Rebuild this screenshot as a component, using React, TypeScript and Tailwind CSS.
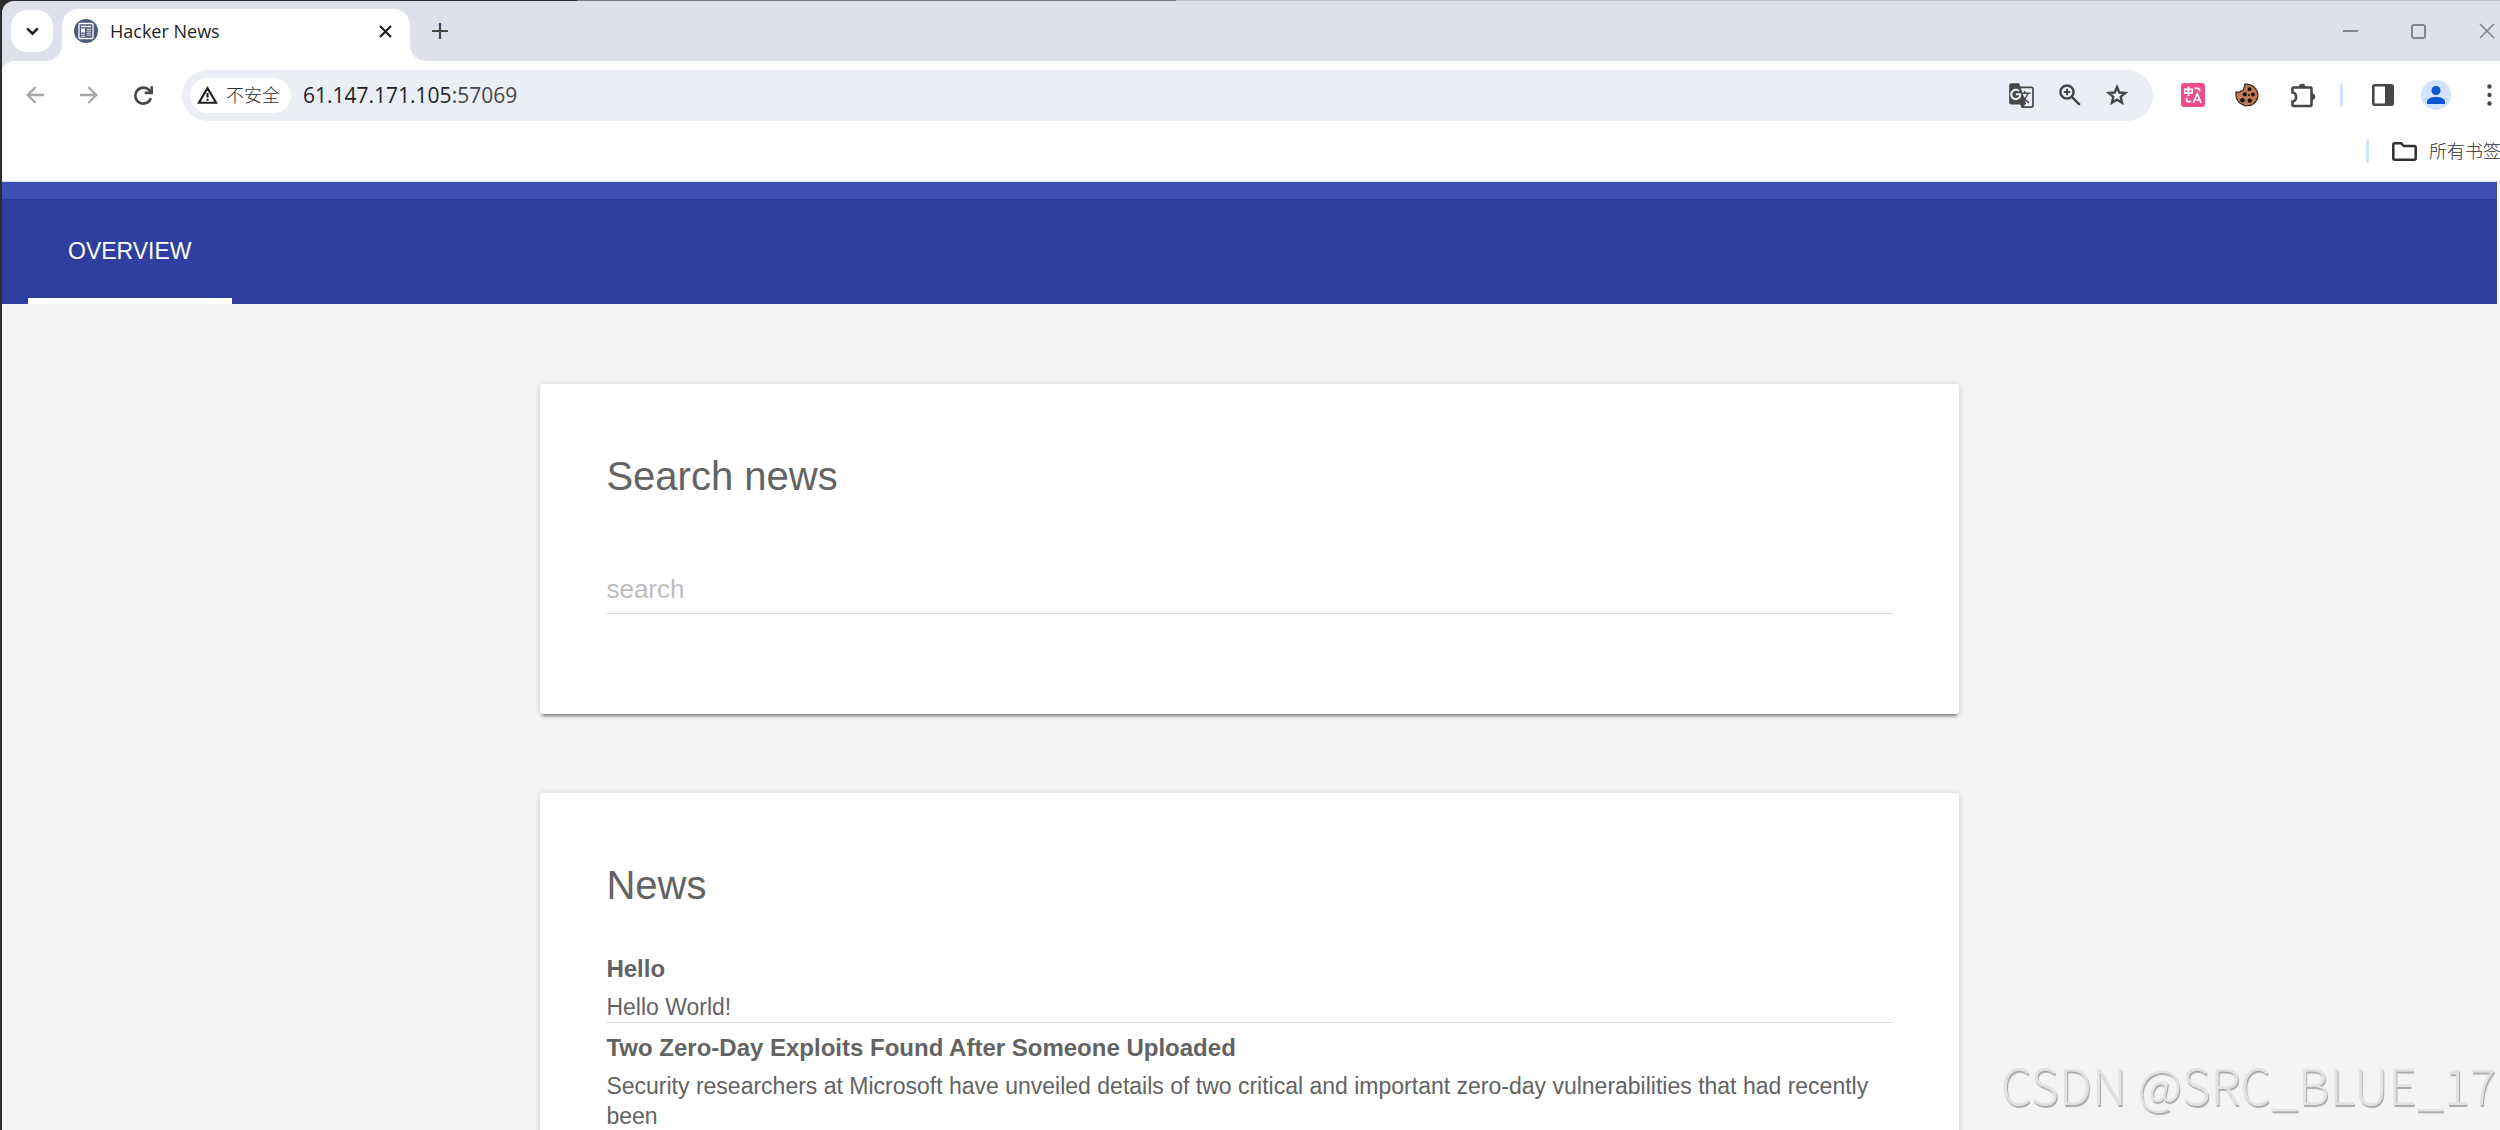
import React, { useState } from "react";
import { MdGTranslate } from "react-icons/md";

const news = [
    {
        title: "Hello",
        body: "Hello World!",
    },
    {
        title: "Two Zero-Day Exploits Found After Someone Uploaded",
        body: "Security researchers at Microsoft have unveiled details of two critical and important zero-day vulnerabilities that had recently been",
    },
];

const Favicon = () => (
    <svg viewBox="0 0 24 24" className="size-6 shrink-0">
        <circle cx="12" cy="12" r="12" fill="#4b5d78" />
        <rect x="5" y="4.5" width="14" height="15" rx="1" fill="#4b5d78" stroke="#fff" strokeWidth="1.3" />
        <path d="M7 7.500h10" stroke="#fff" strokeWidth="1.4" />
        <rect x="7" y="9.500" width="4" height="4" fill="#fff" />
        <path d="M12.500 10.200H17M12.500 12.200H17M12.500 14.200H17M12.500 16.200H17M7 15.200h4M7 17.200h4" stroke="#dfe5ee" strokeWidth="1" />
    </svg>
);

const Chevron = () => (
    <svg viewBox="0 0 13 9" className="h-[9px] w-[13px]" fill="none" stroke="currentColor" strokeWidth="2.6">
        <path d="M1.200 1.300l5.300 5.300 5.300-5.300" />
    </svg>
);

const Cross = () => (
    <svg viewBox="0 0 13 13" className="size-[13px]" stroke="currentColor" strokeWidth="2.200">
        <path d="M1 1l11 11M12 1L1 12" />
    </svg>
);

const Plus = () => (
    <svg viewBox="0 0 16 16" className="size-4" stroke="currentColor" strokeWidth="2.200">
        <path d="M8 0v16M0 8h16" />
    </svg>
);

const BackArrow = () => (
    <svg viewBox="0 0 18 18" className="size-[18px]" fill="none" stroke="currentColor" strokeWidth="2.300">
        <path d="M18 9H2M9.700 1L1.700 9l8 8" />
    </svg>
);

const ForwardArrow = () => (
    <svg viewBox="0 0 18 18" className="size-[18px]" fill="none" stroke="currentColor" strokeWidth="2.300">
        <path d="M0 9h16M8.300 1l8 8-8 8" />
    </svg>
);

const Reload = () => (
    <svg viewBox="0 0 19 19" className="size-[19px]" fill="none" stroke="currentColor" strokeWidth="2.600">
        <path d="M16.900 12.300A8 8 0 1 1 15.300 4.200L17 6.300" />
        <path d="M17.700.3v6.600h-7" />
    </svg>
);

const Warning = () => (
    <svg viewBox="0 0 21 18" className="h-[18px] w-[21px] text-[#1f1f1f]" fill="none" stroke="currentColor" strokeWidth="2.100">
        <path d="M10.500 2.100L1.900 16.800h17.200z" />
        <path d="M10.500 7v4.500M10.500 12.800v2" />
    </svg>
);

const ZoomIn = () => (
    <svg viewBox="0 0 22 22" className="size-[22px]" fill="none" stroke="currentColor" strokeWidth="2.500">
        <circle cx="8" cy="8" r="6.600" />
        <path d="M12.800 12.800l8 8" />
        <path d="M8 4.800v6.400M4.800 8h6.400" strokeWidth="2" />
    </svg>
);

const Star = () => (
    <svg viewBox="0 0 24 24" className="size-6" fill="none" stroke="currentColor" strokeWidth="2.400">
        <path d="M12 4l2.300 5.500 6 .5-4.600 3.900 1.400 5.800-5.100-3.100-5.100 3.100 1.400-5.800L3.700 10l6-.5z" />
    </svg>
);

const PinkTranslate = () => (
    <svg viewBox="0 0 24 24" className="size-6">
        <rect width="24" height="24" rx="3" fill="#ef4b8b" />
        <g fill="none" stroke="#fff" strokeWidth="1.700">
            <path d="M3.800 6.300h7.400v3.900H3.800zM7.500 3.800v9.200" />
            <path d="M13.500 5.300h3.200c1.200 0 1.800.6 1.800 1.800v1.400M5.500 14.500v2c0 1.400.7 2.100 2 2.100h2.700" />
            <path d="M12.300 20l3.900-9.200L20.100 20M13.500 17h5.400" />
        </g>
    </svg>
);

const Cookie = () => (
    <svg viewBox="0 0 24 24" className="size-6">
        <path d="M9.500 1.200c.8 1.700.2 3.100-.8 3.600.3 2.200-1 3.700-3 3.300-1.300 1.700-3.200 1.500-4.500.5-1.400 6 2 12.600 8.800 14 6.500 1.200 12-3.300 12.800-9C23.500 7 18.500.6 9.500 1.200z" fill="#bd7854" stroke="#33231c" strokeWidth="1.100" />
        <g fill="#17100d">
            <circle cx="14.500" cy="6.200" r="1.900" />
            <circle cx="9.800" cy="11.300" r="2" />
            <circle cx="18" cy="11.500" r="1.900" />
            <circle cx="7.500" cy="17.200" r="2.200" />
            <circle cx="14.800" cy="17.600" r="2.200" />
            <circle cx="13.800" cy="12" r="1" />
        </g>
    </svg>
);

const Puzzle = () => (
    <svg viewBox="0 0 25 25" className="size-[25px]" fill="none" stroke="currentColor" strokeWidth="2.600">
        <path d="M1.500 5.500q0-1 1-1h17q1 0 1 1v16.500q0 1-1 1h-17q-1 0-1-1v-3.500c4.800-.6 4.800-8.400 0-9z" />
        <path d="M8 4a3.200 3.200 0 0 1 6.400 0zM21 10.500a3.200 3.200 0 0 1 0 6.400z" fill="currentColor" stroke="none" />
    </svg>
);

const SidePanel = () => (
    <svg viewBox="0 0 22 22" className="size-[22px]">
        <rect x="1.300" y="1.300" width="19.400" height="19.400" rx="1.500" fill="none" stroke="currentColor" strokeWidth="2.600" />
        <path d="M13 1h7.500v20H13z" fill="currentColor" />
    </svg>
);

const Person = () => (
    <svg viewBox="0 0 18 18" className="size-[18px]" fill="currentColor">
        <circle cx="9" cy="4.500" r="4.500" />
        <path d="M0 18v-2.500C0 12.300 5 11 9 11s9 1.300 9 4.500V18z" />
    </svg>
);

const Dots = () => (
    <svg viewBox="0 0 5 22" className="h-[22px] w-[5px]" fill="currentColor">
        <circle cx="2.500" cy="2.500" r="2.200" />
        <circle cx="2.500" cy="11" r="2.200" />
        <circle cx="2.500" cy="19.500" r="2.200" />
    </svg>
);

const Folder = () => (
    <svg viewBox="0 0 25 19" className="h-[19px] w-[25px]" fill="none" stroke="currentColor" strokeWidth="2.500">
        <path d="M1.300 2.800q0-1.500 1.500-1.500h6.400l2.600 2.700h10.400q1.500 0 1.500 1.500v10.700q0 1.500-1.500 1.500H2.800q-1.500 0-1.500-1.500z" />
    </svg>
);

const BrowserTabs = () => (
    <div className="bg-[#2d2d2f]">
        <div className="flex h-px">
            <span className="w-[23%]"></span>
            <span className="w-[24%] bg-[#77787c]"></span>
            <span className="grow bg-[#bcbcc0]"></span>
        </div>
        <div className="flex h-[60px] items-end justify-between rounded-tl-xl bg-[#dee1e9]">
            <div className="flex h-[52px] items-start">
                <button aria-label="Search tabs" className="ml-[9px] mt-px flex size-[42px] items-center justify-center rounded-2xl bg-white text-[#1f1f1f]">
                    <Chevron />
                </button>
                <div className="relative ml-[9px] flex h-[52px] w-[348px] items-center rounded-t-2xl bg-white pb-2 pl-3 pr-[18px]">
                    <span className="absolute -left-4 bottom-0 size-4 overflow-hidden">
                        <span className="block size-4 rounded-br-2xl shadow-[0_0_0_16px_#fff]"></span>
                    </span>
                    <span className="absolute -right-4 bottom-0 size-4 overflow-hidden">
                        <span className="block size-4 rounded-bl-2xl shadow-[0_0_0_16px_#fff]"></span>
                    </span>
                    <Favicon />
                    <span className="ml-3 grow text-[18px] text-[#1f1f1f]">Hacker News</span>
                    <button aria-label="Close tab" className="text-[#1f1f1f]"><Cross /></button>
                </div>
                <button aria-label="New tab" className="ml-[22px] mt-[14px] text-[#474747]"><Plus /></button>
            </div>
            <div className="flex h-[60px] items-center text-[#838589]">
                <button aria-label="Minimize" className="h-[2px] w-[15px] bg-[#838589]"></button>
                <button aria-label="Maximize" className="ml-[53px] size-[15px] rounded-[3px] border-2 border-[#838589]"></button>
                <button aria-label="Close" className="ml-[53px] mr-[5px]">
                    <svg viewBox="0 0 16 16" className="size-4" stroke="currentColor" strokeWidth="1.700">
                        <path d="M1 1l14 14M15 1L1 15" />
                    </svg>
                </button>
            </div>
        </div>
    </div>
);

const Toolbar = () => (
    <div className="bg-[#dee1e9]">
        <div className="flex h-[68px] items-center rounded-tl-xl bg-white text-[#474747]">
            <button aria-label="Back" className="ml-6 text-[#a8a8a8]"><BackArrow /></button>
            <button aria-label="Forward" className="ml-9 text-[#a8a8a8]"><ForwardArrow /></button>
            <button aria-label="Reload" className="ml-9"><Reload /></button>

            <div className="ml-[29px] flex h-[51px] grow items-center rounded-full bg-[#ebeef7] pl-2 pr-6">
                <button className="flex h-[35px] items-center gap-2 rounded-full bg-white pl-[7px] pr-[11px] text-[18px] font-light text-[#303030]">
                    <Warning />
                    不安全
                </button>
                <span className="ml-3 grow pt-[2px] text-[21px] text-[#474747]">
                    <span className="text-[#1f1f1f]">61.147.171.105</span>:57069
                </span>
                <div className="flex items-center gap-6">
                    <button aria-label="Translate this page"><MdGTranslate size={27} /></button>
                    <button aria-label="Zoom"><ZoomIn /></button>
                    <button aria-label="Bookmark this page"><Star /></button>
                </div>
            </div>

            <button aria-label="Translate" className="ml-7"><PinkTranslate /></button>
            <button aria-label="Cookies" className="ml-[30px]"><Cookie /></button>
            <button aria-label="Extensions" className="ml-8"><Puzzle /></button>
            <span className="ml-6 h-6 w-[3px] rounded-full bg-[#d3e3fd]"></span>
            <button aria-label="Side panel" className="ml-[29px]"><SidePanel /></button>
            <button aria-label="Profile" className="ml-[27px] flex size-[30px] items-center justify-center rounded-full bg-[#d3e3fd] text-[#0b57d0]">
                <Person />
            </button>
            <button aria-label="Menu" className="ml-9 mr-2"><Dots /></button>
        </div>
    </div>
);

const BookmarksBar = () => (
    <div className="flex h-[53px] items-center justify-end overflow-hidden border-b border-[#dcdee2] bg-white pb-2 text-[#303030]">
        <span className="h-6 w-[3px] rounded-full bg-[#d3e3fd]"></span>
        <button className="-mr-px ml-[23px] flex items-center gap-3 whitespace-nowrap text-[18px] font-light">
            <Folder />
            所有书签
        </button>
    </div>
);

const App = () => {
    const [query, setQuery] = useState("");

    return (
        <div className="relative flex h-screen flex-col overflow-hidden bg-[#f4f4f4] border-l-2 border-[#2d2d2f]">
            <div className="shrink-0 font-['Open_Sans','Noto_Sans_CJK_SC',sans-serif]">
                <BrowserTabs />
                <Toolbar />
                <BookmarksBar />
            </div>

            <div className="mr-[3px] flex grow flex-col font-['Liberation_Sans',Arial,sans-serif] text-[#636363]">
                <header className="border-t-[17px] border-[#3f51b5] bg-[#303f9f]">
                    <nav className="flex pl-[26px]">
                        <a href="#overview" className="flex h-[105px] items-center border-b-[6px] border-white px-10 pt-[6px] text-[23px] text-white">
                            OVERVIEW
                        </a>
                    </nav>
                </header>

                <main className="mx-auto flex w-[57%] flex-col gap-[79px] px-[2px] pt-20">
                    <section className="rounded-[3px] bg-white px-[66px] pb-[100px] pt-16 shadow-[0_1px_6px_rgba(0,0,0,0.18),0_4px_3px_-2px_rgba(0,0,0,0.4)]">
                        <h4 className="text-[40px] leading-[56px]">Search news</h4>
                        <input
                            type="text"
                            aria-label="search"
                            placeholder="search"
                            value={query}
                            onChange={(e) => setQuery(e.target.value)}
                            className="mt-[60px] block h-[50px] w-full border-b border-[#dedede] bg-transparent pt-[2px] text-[26px] outline-none placeholder:text-[#bdbdbd]"
                        />
                    </section>

                    <section className="rounded-[3px] bg-white px-[66px] pb-16 pt-16 shadow-[0_1px_6px_rgba(0,0,0,0.18),0_4px_3px_-2px_rgba(0,0,0,0.4)]">
                        <h4 className="mb-[31px] text-[40px] leading-[56px]">News</h4>
                        {news.map((item) => (
                            <article key={item.title} className="border-b border-[#dedede]">
                                <h6 className="pt-[10px] text-[24px] font-bold leading-[30px]">{item.title}</h6>
                                <p className="pt-2 text-[23px] leading-[30px]">{item.body}</p>
                            </article>
                        ))}
                    </section>
                </main>
            </div>

            <span className="absolute bottom-[10px] right-1 font-['Noto_Sans_CJK_SC',sans-serif] text-[49px] font-light text-[#e2e2e2] [text-shadow:1px_2px_1px_#a8a8a8]">
                CSDN @SRC_BLUE_17
            </span>
        </div>
    );
};

export default App;
